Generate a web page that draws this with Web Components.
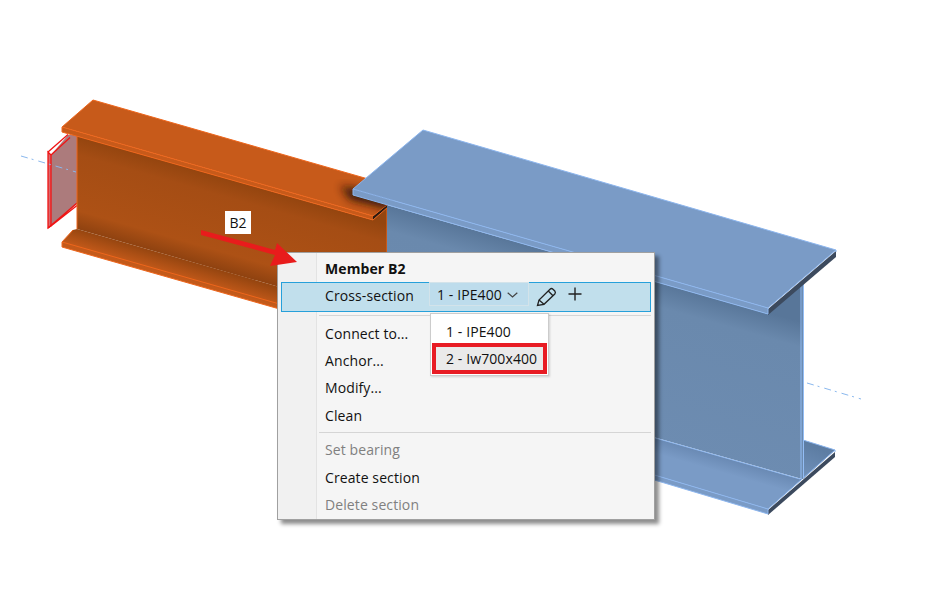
<!DOCTYPE html>
<html lang="en">
<head>
<meta charset="utf-8">
<title>Member B2</title>
<style>
    html, body { margin: 0; background: #fff; }
    #stage {
        position: relative;
        width: 932px;
        height: 603px;
        overflow: hidden;
        font: 14px "Open Sans", "Noto Sans", sans-serif;
        letter-spacing: .1px;
        color: #111;
    }
</style>
</head>
<body>
<div id="stage">
    <beam-scene></beam-scene>
    <context-menu>
        <menu-item bold>Member B2</menu-item>
        <section-row label="Cross-section" value="1 - IPE400">
            <section-option>1 - IPE400</section-option>
            <section-option marked>2 - Iw700x400</section-option>
        </section-row>
        <menu-sep></menu-sep>
        <menu-item>Connect to...</menu-item>
        <menu-item>Anchor...</menu-item>
        <menu-item>Modify...</menu-item>
        <menu-item>Clean</menu-item>
        <menu-sep></menu-sep>
        <menu-item disabled>Set bearing</menu-item>
        <menu-item>Create section</menu-item>
        <menu-item disabled>Delete section</menu-item>
    </context-menu>
    <member-tag>B2</member-tag>
</div>

<script>
class BeamScene extends HTMLElement {
    constructor() {
        super();
        this.attachShadow({ mode: "open" });
        this.shadowRoot.innerHTML = `
            <style>
                :host { position: absolute; left: 0; top: 0; display: block; width: 932px; height: 603px; }
                svg { display: block; }
                .o-line { stroke: #ee661c; stroke-width: 1; fill: none; }
                .b-line { stroke: #8db6ee; stroke-width: 1; fill: none; }
                .axis { stroke: #8ab8ee; stroke-width: 1; fill: none; stroke-dasharray: 7 4 2 5; }
            </style>
            <svg width="932" height="603" viewBox="0 0 932 603">
                <defs>
                    <linearGradient id="oWeb" gradientUnits="userSpaceOnUse" x1="77" y1="136" x2="52.5" y2="222">
                        <stop offset="0" stop-color="#94450f"/>
                        <stop offset=".2" stop-color="#a54d14"/>
                        <stop offset=".8" stop-color="#ad5115"/>
                        <stop offset="1" stop-color="#8f4210"/>
                    </linearGradient>
                    <linearGradient id="oFoot" gradientUnits="userSpaceOnUse" x1="77" y1="229" x2="72" y2="246">
                        <stop offset="0" stop-color="#974610"/>
                        <stop offset="1" stop-color="#c45a1a"/>
                    </linearGradient>
                    <linearGradient id="bWeb" gradientUnits="userSpaceOnUse" x1="500" y1="237" x2="449" y2="418">
                        <stop offset="0" stop-color="#587699"/>
                        <stop offset=".13" stop-color="#6a89ad"/>
                        <stop offset=".86" stop-color="#6d8cb1"/>
                        <stop offset="1" stop-color="#4f6d91"/>
                    </linearGradient>
                    <linearGradient id="bFlange" gradientUnits="userSpaceOnUse" x1="700" y1="451" x2="690" y2="486">
                        <stop offset="0" stop-color="#6a8ab4"/>
                        <stop offset=".4" stop-color="#7a9bc6"/>
                    </linearGradient>
                    <linearGradient id="bFoot" gradientUnits="userSpaceOnUse" x1="810" y1="445" x2="790" y2="490">
                        <stop offset="0" stop-color="#5d7da3"/>
                        <stop offset="1" stop-color="#7a9bc6"/>
                    </linearGradient>
                    <filter id="soft" x="-30%" y="-30%" width="160%" height="160%"><feGaussianBlur stdDeviation="4"/></filter>
                    <clipPath id="oTopClip"><polygon points="62,127 93,100 410,191 388,204 373,216 62,127"/></clipPath>
                </defs>

                <!-- end plate of the orange member -->
                <polygon points="51,155 68,135 77,135 77,204 51,226" fill="#ac7b7c"/>
                <polygon points="48,152 51,155 51,226 48,228" fill="#d9686c" stroke="#f01414" stroke-width="1.300"/>
                <path d="M48 152L68 134.500M51 155L70 137.500M48 228L77 203M51 226L77 205.500" stroke="#f01414" stroke-width="1.300" fill="none"/>
                <path class="axis" d="M21 156L76 172"/>

                <!-- orange member -->
                <polygon points="77,136 373,220 387,207 387,318 77,229" fill="url(#oWeb)"/>
                <polygon points="62,242 73,230 77,229 290,290 290,312 62,247" fill="url(#oFoot)"/>
                <path class="o-line" d="M62 242L290 307M62 247L290 312M62 242V247M73 230L62 242"/>
                <path d="M77 135V229M387 207V260" class="o-line"/>
                <polygon points="62,127 93,100 410,191 388,204 373,216" fill="#c75a1a"/>
                <polygon points="62,127 373,216 373,220 62,132" fill="#c75a1a"/>
                <polygon points="373,216 388,204 388,207 373,220" fill="#2c1a10"/>
                <path class="o-line" d="M62 127L373 216L388 204M62 132L373 220L388 207M62 127V132M62 127L93 100L410 191"/>
                <polygon points="340,186 400,195 388,209 350,200" fill="#2a1408" opacity=".9" filter="url(#soft)" clip-path="url(#oTopClip)"/>

                <!-- blue member -->
                <polygon points="387,205 768,314 802,283 802,479 387,362" fill="url(#bWeb)"/>
                <polygon points="387,395 768,509 835,450 803,440 803,479 800,479 387,362" fill="url(#bFlange)"/>
                <polygon points="803,440 835,450 803,479" fill="url(#bFoot)"/>
                <polygon points="387,395 768,509 768,514 387,400" fill="#7a9bc6"/>
                <polygon points="768,510 835,452 835,457 768,515" fill="#3c4a5e"/>
                <path class="b-line" d="M387 362L800 479M387 395L768 509L835 450L803 440M387 400L768 514M835 450V452M768 509V514"/>
                <path d="M801 283V479M803.500 282V478" stroke="#93bdf5" stroke-width="1" fill="none"/>
                <rect x="802" y="283" width="1" height="196" fill="#6d8cb1"/>

                <polygon points="353,189 423,130 836,250 768,308" fill="#7a9bc6"/>
                <polygon points="353,189 768,308 768,314 353,195" fill="#7a9bc6"/>
                <polygon points="768,309 836,251 836,257 768,315" fill="#3c4a5e"/>
                <path class="b-line" d="M353 189L423 130L836 250L768 308ZM353 189V195L768 314M836 250V252M768 308V314"/>

                <path class="axis" d="M807 383L861 399"/>
            </svg>
        `;
    }
}

class ContextMenu extends HTMLElement {
    constructor() {
        super();
        this.attachShadow({ mode: "open" });
        this.shadowRoot.innerHTML = `
            <style>
                :host {
                    position: absolute;
                    left: 277px;
                    top: 252px;
                    box-sizing: border-box;
                    width: 378px;
                    height: 268px;
                    padding-top: 3px;
                    display: flex;
                    flex-direction: column;
                    border: 1px solid #a0a0a0;
                    box-shadow: 4px 4px 4px rgba(0, 0, 0, .45);
                    background: linear-gradient(to right, #f1f1f1 38px, #e3e3e3 38px, #e3e3e3 39px, #f5f5f5 39px);
                }
            </style>
            <slot></slot>
        `;
    }
}

class MenuItem extends HTMLElement {
    constructor() {
        super();
        this.attachShadow({ mode: "open" });
        this.shadowRoot.innerHTML = `
            <style>
                :host {
                    display: flex;
                    align-items: center;
                    box-sizing: border-box;
                    height: 27.500px;
                    padding: 0 0 1px 47px;
                    font-size: 14px;
                    color: #111;
                }
                :host([bold]) { font-weight: 700; height: 26px; padding-bottom: 0; }
                :host([disabled]) { color: #808080; }
            </style>
            <slot></slot>
        `;
    }
}

class MenuSep extends HTMLElement {
    constructor() {
        super();
        this.attachShadow({ mode: "open" });
        this.shadowRoot.innerHTML = `
            <style>
                :host {
                    display: block;
                    height: 1px;
                    margin: 2px 3px 4px 41px;
                    background: #d5d5d5;
                }
            </style>
        `;
    }
}

class SectionRow extends HTMLElement {
    constructor() {
        super();
        this.attachShadow({ mode: "open" });
        this.shadowRoot.innerHTML = `
            <style>
                :host {
                    position: relative;
                    display: flex;
                    box-sizing: border-box;
                    height: 30px;
                    margin: 0 3px;
                    margin-bottom: 1px;
                    padding-left: 43px;
                    border: 1px solid #26a0da;
                    background: #c1dfec;
                    font-size: 14px;
                }
                .label { width: 104px; line-height: 25px; }
                .combo {
                    box-sizing: border-box;
                    width: 100px;
                    height: 24px;
                    margin-top: -1px;
                    padding: 2px 0 0 7px;
                    display: flex;
                    align-items: center;
                    gap: 5px;
                    border: 1px solid #d3e3ea;
                    background: #bddcec;
                }
                .tool { display: block; }
                .pencil { margin: 4px 0 0 7px; }
                .plus { margin: 4px 0 0 11px; }
                .list {
                    position: absolute;
                    left: 148px;
                    top: 30px;
                    box-sizing: border-box;
                    width: 119px;
                    padding: 1px;
                    border: 1px solid #ccc;
                    background: #fff;
                    box-shadow: 1px 1px 2px rgba(0, 0, 0, .15);
                }
            </style>
            <span class="label"></span>
            <div class="combo">
                <span class="value"></span>
                <svg width="11" height="6" viewBox="0 0 11 6"><path d="M.7 .7L5.500 5L10.300 .7" fill="none" stroke="#444" stroke-width="1.200"/></svg>
            </div>
            <svg class="tool pencil" width="21" height="20" viewBox="0 0 21 20" fill="none" stroke="#222" stroke-width="1.300">
                <path d="M1.500 18.500L3 13L14 2.200Q15.500 .9 17 2.200L18.800 4Q20 5.500 18.800 7L8 17.300Z"/>
                <path d="M3 13L8 17.300M12.300 4L17 8.800"/>
            </svg>
            <svg class="tool plus" width="14" height="14" viewBox="0 0 14 14" stroke="#222" stroke-width="1.400"><path d="M7 .5V13.500M.5 7H13.500"/></svg>
            <div class="list"><slot></slot></div>
        `;
        this.shadowRoot.querySelector(".label").textContent = this.getAttribute("label");
        this.shadowRoot.querySelector(".value").textContent = this.getAttribute("value");
    }
}

class SectionOption extends HTMLElement {
    constructor() {
        super();
        this.attachShadow({ mode: "open" });
        this.shadowRoot.innerHTML = `
            <style>
                :host {
                    display: flex;
                    align-items: center;
                    box-sizing: border-box;
                    height: 28px;
                    padding: 5px 0 0 14px;
                    font-size: 14px;
                    color: #111;
                }
                :host([marked]) {
                    height: 31px;
                    padding: 0 0 0 10px;
                    border: 4px solid #e81c24;
                    background: #eaeaea;
                }
            </style>
            <slot></slot>
        `;
    }
}

class MemberTag extends HTMLElement {
    constructor() {
        super();
        this.attachShadow({ mode: "open" });
        this.shadowRoot.innerHTML = `
            <style>
                :host { position: absolute; left: 200px; top: 211px; display: block; width: 100px; height: 55px; }
                .name {
                    position: absolute;
                    left: 25px;
                    top: 0;
                    width: 26px;
                    height: 23px;
                    background: #fff;
                    text-align: center;
                    font-size: 14px;
                    line-height: 23px;
                    color: #111;
                }
                svg { position: absolute; left: 0; top: 0; }
            </style>
            <div class="name"><slot></slot></div>
            <svg width="100" height="55" viewBox="0 0 100 55">
                <path d="M1 19L1 24L75 44L70 55L97 51L77 32L75 39Z" fill="#e81c1c"/>
            </svg>
        `;
    }
}

customElements.define("beam-scene", BeamScene);
customElements.define("context-menu", ContextMenu);
customElements.define("menu-item", MenuItem);
customElements.define("menu-sep", MenuSep);
customElements.define("section-row", SectionRow);
customElements.define("section-option", SectionOption);
customElements.define("member-tag", MemberTag);
</script>
</body>
</html>
